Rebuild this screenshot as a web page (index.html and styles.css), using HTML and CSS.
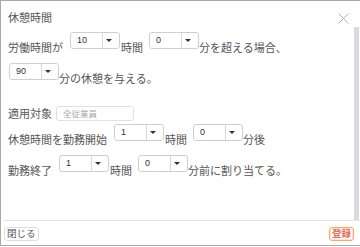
FILE: index.html
```html
<!DOCTYPE html>
<html lang="ja">
<head>
    <meta charset="UTF-8">
    <meta name="viewport" content="width=device-width, initial-scale=1.0">
    <title>休憩時間</title>
    <link rel="stylesheet" href="styles.css">
</head>
<body>

<div class="dialog">
    <div class="dialog-header">
        <span class="dialog-title">休憩時間</span>
        <span class="close-btn">
            <svg width="11" height="11" viewBox="0 0 11 11"><path d="M0.5 0.5 L10.5 10.5 M10.5 0.5 L0.5 10.5" stroke="#b4b4b4" stroke-width="1" fill="none"/></svg>
        </span>
    </div>

    <div class="dialog-body">
        <div class="dialog-content">
            <div class="row row1">
                <span class="txt before">労働時間が</span>
                <div class="sel"><span class="sel-val">10</span><span class="sel-caret"><i></i></span></div>
                <span class="txt after">時間</span>
                <div class="sel"><span class="sel-val">0</span><span class="sel-caret"><i></i></span></div>
                <span class="txt">分を超える場合、</span>
            </div>
            <div class="row row2">
                <div class="sel first"><span class="sel-val">90</span><span class="sel-caret"><i></i></span></div>
                <span class="txt">分の休憩を与える。</span>
            </div>
            <div class="row row3">
                <span class="txt-plain">適用対象</span>
                <input class="target-input" type="text" placeholder="全従業員">
            </div>
            <div class="row row4">
                <span class="txt before">休憩時間を勤務開始</span>
                <div class="sel"><span class="sel-val">1</span><span class="sel-caret"><i></i></span></div>
                <span class="txt after">時間</span>
                <div class="sel"><span class="sel-val">0</span><span class="sel-caret"><i></i></span></div>
                <span class="txt">分後</span>
            </div>
            <div class="row row5">
                <span class="txt before">勤務終了</span>
                <div class="sel"><span class="sel-val">1</span><span class="sel-caret"><i></i></span></div>
                <span class="txt after">時間</span>
                <div class="sel"><span class="sel-val">0</span><span class="sel-caret"><i></i></span></div>
                <span class="txt">分前に割り当てる。</span>
            </div>
        </div>
        <div class="scrollbar"></div>
    </div>

    <div class="dialog-footer">
        <button class="btn">閉じる</button>
        <button class="btn btn-save">登録</button>
    </div>
</div>

</body>
</html>
```

FILE: styles.css
```css
body {
    margin: 0;
    background: #fff;
    font-family: "Liberation Sans", "Noto Sans CJK JP", sans-serif;
    color: #555;
}
.dialog {
    width: 360px;
    height: 246px;
    box-sizing: border-box;
    border-top: 1px solid #a8a8a8;
    border-left: 1px solid #a8a8a8;
    border-bottom: 1px solid #a8a8a8;
    display: flex;
    flex-direction: column;
}
.dialog-header {
    height: 26px;
    box-sizing: border-box;
    padding: 10px 11px 0 7px;
    display: flex;
    justify-content: space-between;
    align-items: flex-start;
}
.dialog-title {
    font-size: 11px;
    line-height: 14px;
}
.close-btn {
    display: block;
    margin-top: 2px;
    height: 11px;
}
.close-btn svg {
    display: block;
}
.dialog-body {
    flex: 1;
    display: flex;
    overflow: hidden;
}
.dialog-content {
    flex: 1;
    padding: 5px 0 0 7px;
}
.scrollbar {
    width: 5px;
    margin-right: 1px;
    background: #dadade;
}
.row {
    display: flex;
    align-items: flex-start;
    font-size: 11px;
}
.row1 { margin-bottom: 8px; }
.row2 { margin-bottom: 20px; }
.row3 { margin-bottom: 3px; align-items: center; }
.row4 { margin-bottom: 8px; }
.txt {
    padding-top: 9px;
    line-height: 14px;
    white-space: nowrap;
}
.txt.before { margin-right: 7px; }
.txt.after { margin-left: 1px; margin-right: 6px; }
.txt-plain {
    line-height: 14px;
    margin-right: 4px;
}
.sel {
    width: 50px;
    height: 17px;
    box-sizing: border-box;
    border: 1px solid #cfcfcf;
    border-radius: 3px;
    display: flex;
    background: #fff;
}
.sel.first { margin-left: 1px; }
.sel-val {
    width: 31px;
    box-sizing: border-box;
    padding: 2px 0 0 6px;
    font-size: 9px;
    line-height: 11px;
    color: #333;
}
.sel-caret {
    flex: 1;
    border-left: 1px solid #d8d8d8;
    padding: 6px 0 0 3px;
}
.sel-caret i {
    display: block;
    width: 0;
    height: 0;
    border-left: 3px solid transparent;
    border-right: 3px solid transparent;
    border-top: 3px solid #333;
}
.target-input {
    width: 78px;
    height: 15px;
    box-sizing: border-box;
    border: 1px solid #e0e0e0;
    border-radius: 3px;
    padding: 0 0 0 6px;
    margin: 0;
    font-family: "Liberation Sans", "Noto Sans CJK JP", sans-serif;
    font-size: 8.5px;
    outline: none;
}
.target-input::placeholder {
    color: #a8a8a8;
}
.dialog-footer {
    margin-left: 3px;
    border-top: 1px solid #e4e4ea;
    padding: 6px 6px 0 0;
    flex: 0 0 auto;
    height: 25px;
    box-sizing: border-box;
    display: flex;
    justify-content: space-between;
    align-items: flex-start;
}
.btn {
    font-family: "Liberation Sans", "Noto Sans CJK JP", sans-serif;
    font-size: 9.5px;
    line-height: 12px;
    height: 14px;
    padding: 0 2px;
    margin: 0;
    background: #fff;
    border: 1px solid #dedede;
    border-radius: 3px;
    color: #555;
}
.btn-save {
    border-color: #f6a868;
    box-shadow: inset 0 0 0 1px #fde3d8;
    color: #ee6a52;
    font-weight: bold;
}
```
